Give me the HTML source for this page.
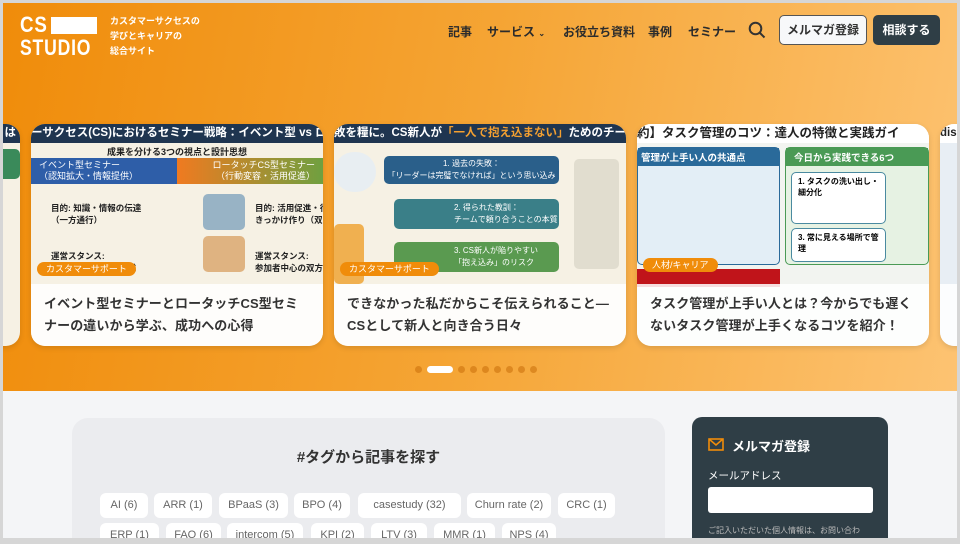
<!DOCTYPE html>
<html><head><meta charset="utf-8"><style>
*{margin:0;padding:0;box-sizing:border-box}
body{width:960px;height:544px;overflow:hidden;background:#d6d6d6;font-family:"Liberation Sans","Noto Sans CJK JP",sans-serif;position:relative}
.page{position:absolute;left:3px;top:3px;width:954px;height:535px;background:#f4f5f7;overflow:hidden}
.hero{position:absolute;left:0;top:0;width:954px;height:388px;background:linear-gradient(100deg,#f08c0a 0%,#f5a535 50%,#fdc372 100%)}
.logo{position:absolute;left:17px;top:10px;color:#fff;font-weight:bold;font-size:22px;line-height:23px;width:80px}
.logo .l2{transform:scaleX(.8);transform-origin:left;letter-spacing:1px}
.logo .l1{transform:scaleX(.85);transform-origin:left;letter-spacing:1px}
.logo .box{position:absolute;left:31px;top:4px;width:46px;height:17px;background:#fff}
.tag{position:absolute;left:107px;top:11px;color:#fff;font-size:9px;line-height:15px;font-weight:bold}
.nav{position:absolute;top:20px;font-size:12px;font-weight:bold;color:#2c2c2c}
.btn1{position:absolute;left:776px;top:12px;width:88px;height:30px;border:1px solid #555;border-radius:5px;background:#f7f8fa;font-size:12px;font-weight:bold;color:#333;text-align:center;line-height:28px}
.btn2{position:absolute;left:870px;top:12px;width:67px;height:30px;border-radius:5px;background:#2f3e46;color:#fff;font-size:12px;font-weight:bold;text-align:center;line-height:30px}
.card{position:absolute;top:121px;width:292px;height:222px;border-radius:14px;overflow:hidden;background:#f6f1e4;box-shadow:0 2px 6px rgba(0,0,0,.12)}
.hd{position:absolute;left:0;top:0;width:100%;height:19px;background:#1f3550;color:#fff;font-size:11.5px;font-weight:bold;white-space:nowrap;line-height:19px}
.ov{position:absolute;left:0;top:160px;width:100%;height:62px;background:rgba(255,255,255,.86);padding:9px 13px;font-size:13px;letter-spacing:.1px;line-height:22px;color:#333;font-weight:bold;white-space:nowrap}
.pill{position:absolute;top:138px;height:14px;border-radius:7px;background:#f08c0a;color:#fff;font-size:9px;line-height:14px;padding:0 9px}
.blk{position:absolute;border-radius:5px}
.dots{position:absolute;top:358px;left:412px}
.dots span{display:inline-block;width:7px;height:7px;border-radius:50%;background:rgba(200,110,10,.55);margin-right:5px;vertical-align:middle}
.tags{position:absolute;left:69px;top:415px;width:593px;height:140px;background:#ebecef;border-radius:16px}
.tags h2{text-align:center;font-size:15px;color:#333;margin-top:28px}
.tg{position:absolute;height:25px;background:#fff;border-radius:6px;font-size:11px;color:#666;line-height:25px;text-align:center}
.side{position:absolute;left:689px;top:414px;width:196px;height:140px;background:#2f3e46;border-radius:10px;color:#fff}
</style></head><body>
<div class="page">
<div class="hero">
 <div class="logo"><div class="l1">CS</div><div class="l2">STUDIO</div><div class="box"></div></div>
 <div class="tag">カスタマーサクセスの<br>学びとキャリアの<br>総合サイト</div>
 <div class="nav" style="left:445px">記事</div>
 <div class="nav" style="left:484px">サービス <span style="font-size:8px">&#8964;</span></div>
 <div class="nav" style="left:560px">お役立ち資料</div>
 <div class="nav" style="left:645px">事例</div>
 <div class="nav" style="left:685px">セミナー</div>
 <svg style="position:absolute;left:745px;top:18px" width="18" height="18" viewBox="0 0 18 18"><circle cx="7.5" cy="7.5" r="5.8" fill="none" stroke="#333" stroke-width="2"/><line x1="12" y1="12" x2="16.5" y2="16.5" stroke="#333" stroke-width="2"/></svg>
 <div class="btn1">メルマガ登録</div>
 <div class="btn2">相談する</div>

 <div class="card" style="left:-275px"><div class="hd" style="text-align:right;padding-right:4px">は</div>
  <div class="blk" style="left:255px;top:25px;width:37px;height:30px;background:#3a8a5a"></div></div>

 <div class="card" style="left:28px">
  <div class="hd">ーサクセス(CS)におけるセミナー戦略：イベント型 vs ロータッチ</div>
  <div style="position:absolute;top:21px;width:100%;text-align:center;font-size:9px;font-weight:bold;color:#222">成果を分ける3つの視点と設計思想</div>
  <div style="position:absolute;left:0;top:34px;width:146px;height:26px;background:#2e5ea8;color:#fff;font-size:9px;padding:2px 8px;line-height:11px">イベント型セミナー<br>（認知拡大・情報提供）</div>
  <div style="position:absolute;left:146px;top:34px;width:146px;height:26px;background:linear-gradient(90deg,#f07a20,#6fa040);color:#fff;font-size:9px;padding:2px 8px;line-height:11px;text-align:right">ロータッチCS型セミナー<br>（行動変容・活用促進）</div>
  <div style="position:absolute;left:20px;top:78px;font-size:8.5px;line-height:12px;color:#222;font-weight:bold">目的: 知識・情報の伝達<br>（一方通行）<br><br><br>運営スタンス:<br>講師中心の一方向形式</div>
  <div style="position:absolute;left:224px;top:78px;font-size:8.5px;line-height:12px;color:#222;font-weight:bold;white-space:nowrap">目的: 活用促進・行<br>きっかけ作り（双方<br><br><br>運営スタンス:<br>参加者中心の双方向</div>
  <div class="blk" style="left:172px;top:70px;width:42px;height:36px;background:#5a8bb0;opacity:.6"></div>
  <div class="blk" style="left:172px;top:112px;width:42px;height:36px;background:#d08a40;opacity:.6"></div>
  <div class="pill" style="left:6px">カスタマーサポート</div>
  <div class="ov">イベント型セミナーとロータッチCS型セミ<br>ナーの違いから学ぶ、成功への心得</div>
 </div>

 <div class="card" style="left:331px">
  <div class="hd">敗を糧に。CS新人が<span style="color:#f5a030">「一人で抱え込まない」</span>ためのチー</div>
  <div class="blk" style="left:50px;top:32px;width:175px;height:28px;background:#2a5f8a;color:#fff;font-size:8px;text-align:center;line-height:12px;padding-top:2px">1. 過去の失敗：<br>「リーダーは完璧でなければ」という思い込み</div>
  <div class="blk" style="left:60px;top:75px;width:165px;height:30px;background:#3a7f88;color:#fff;font-size:8px;line-height:12px;padding:3px 0 0 60px">2. 得られた教訓：<br>チームで頼り合うことの本質</div>
  <div class="blk" style="left:60px;top:118px;width:165px;height:30px;background:#5a9a50;color:#fff;font-size:8px;line-height:12px;padding:3px 0 0 60px">3. CS新人が陥りやすい<br>「抱え込み」のリスク</div>
  <div class="blk" style="left:0;top:28px;width:42px;height:40px;background:#e8eef2;border-radius:20px"></div>
  <div class="blk" style="left:0;top:100px;width:30px;height:60px;background:#f0b050"></div>
  <div class="blk" style="left:240px;top:35px;width:45px;height:110px;background:#d9d4c6;opacity:.7"></div>
  <div class="pill" style="left:6px">カスタマーサポート</div>
  <div class="ov">できなかった私だからこそ伝えられること―<br>CSとして新人と向き合う日々</div>
 </div>

 <div class="card" style="left:634px;background:#f2f4f0">
  <div class="hd" style="background:#fff;color:#222;font-size:12.5px">約】タスク管理のコツ：達人の特徴と実践ガイ</div>
  <div class="blk" style="left:0;top:23px;width:143px;height:118px;background:#e3eef6;border:1px solid #2a6a9a"><div style="background:#2a6a9a;color:#fff;font-size:9.5px;font-weight:bold;padding:2px 3px">管理が上手い人の共通点</div></div>
  <div class="blk" style="left:148px;top:23px;width:144px;height:118px;background:#e6f2e3;border:1px solid #4a9a55"><div style="background:#4a9a55;color:#fff;font-size:9.5px;font-weight:bold;padding:2px 8px">今日から実践できる6つ</div>
   <div class="blk" style="left:5px;top:24px;width:95px;height:52px;background:#fff;border:1px solid #4a8aa0;font-size:8px;font-weight:bold;padding:3px 6px">1. タスクの洗い出し・細分化</div>
   <div class="blk" style="left:5px;top:80px;width:95px;height:34px;background:#fff;border:1px solid #4a8aa0;font-size:8px;font-weight:bold;padding:3px 6px">3. 常に見える場所で管理</div></div>
  <div style="position:absolute;left:0;top:145px;width:143px;height:18px;background:#c0141a"></div>
  <div class="pill" style="left:6px;top:134px">人材/キャリア</div>
  <div class="ov">タスク管理が上手い人とは？今からでも遅く<br>ないタスク管理が上手くなるコツを紹介！</div>
 </div>

 <div class="card" style="left:937px;background:#e8eef4"><div class="hd" style="background:#fff;color:#222">dis</div><div class="ov"></div></div>

 <div class="dots"><span></span><span style="width:26px;border-radius:4px;background:#fff"></span><span></span><span></span><span></span><span></span><span></span><span></span><span></span></div>
</div>

<div class="tags"><h2>#タグから記事を探す</h2>
 <div class="tg" style="left:28px;top:75px;width:48px">AI (6)</div>
 <div class="tg" style="left:82px;top:75px;width:58px">ARR (1)</div>
 <div class="tg" style="left:147px;top:75px;width:69px">BPaaS (3)</div>
 <div class="tg" style="left:222px;top:75px;width:56px">BPO (4)</div>
 <div class="tg" style="left:286px;top:75px;width:103px">casestudy (32)</div>
 <div class="tg" style="left:395px;top:75px;width:84px">Churn rate (2)</div>
 <div class="tg" style="left:486px;top:75px;width:57px">CRC (1)</div>
 <div class="tg" style="left:28px;top:105px;width:59px">ERP (1)</div>
 <div class="tg" style="left:94px;top:105px;width:55px">FAQ (6)</div>
 <div class="tg" style="left:155px;top:105px;width:76px">intercom (5)</div>
 <div class="tg" style="left:239px;top:105px;width:53px">KPI (2)</div>
 <div class="tg" style="left:299px;top:105px;width:56px">LTV (3)</div>
 <div class="tg" style="left:362px;top:105px;width:61px">MMR (1)</div>
 <div class="tg" style="left:430px;top:105px;width:54px">NPS (4)</div>
</div>

<div class="side">
 <svg style="position:absolute;left:16px;top:21px" width="16" height="13" viewBox="0 0 16 13"><rect x="1" y="1" width="14" height="11" fill="none" stroke="#f08c0a" stroke-width="1.6"/><polyline points="1,1 8,7 15,1" fill="none" stroke="#f08c0a" stroke-width="1.6"/></svg>
 <div style="position:absolute;left:40px;top:19px;font-size:13px;font-weight:bold">メルマガ登録</div>
 <div style="position:absolute;left:16px;top:51px;font-size:10.5px">メールアドレス</div>
 <div style="position:absolute;left:16px;top:70px;width:165px;height:26px;background:#fff;border-radius:3px"></div>
 <div style="position:absolute;left:16px;top:108px;font-size:8px;color:#bbb;white-space:nowrap">ご記入いただいた個人情報は、お問い合わ</div>
</div>
</div>
</body></html>
